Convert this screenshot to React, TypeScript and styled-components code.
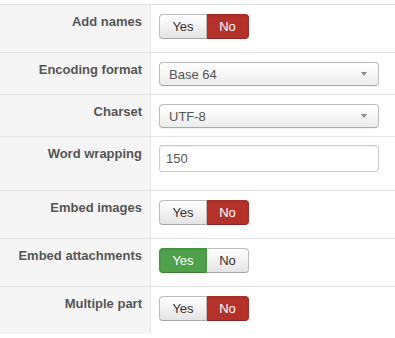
import styled, { createGlobalStyle } from "styled-components";

const GlobalStyle = createGlobalStyle`
  html, body {
    margin: 0;
    padding: 0;
    background: #ffffff;
    font-family: "Liberation Sans", Arial, sans-serif;
    font-size: 13px;
  }
`;

const Page = styled.div`
  padding-top: 4px;
  width: 395px;
  background: #ffffff;
`;

const Table = styled.div`
  border-top: 1px solid #dedede;
`;

const Row = styled.div<{ $last?: boolean }>`
  display: grid;
  grid-template-columns: 151px 1fr;
  border-bottom: ${(p) => (p.$last ? "none" : "1px solid #e3e3e3")};
`;

const Label = styled.div`
  box-sizing: border-box;
  background: #f5f5f5;
  border-right: 1px solid #e3e3e3;
  padding: 8px 8px 0 0;
  text-align: right;
  font-weight: bold;
  font-size: 13px;
  line-height: 18px;
  color: #555555;
`;

const Value = styled.div<{ $top: number; $bottom: number }>`
  padding: ${(p) => `${p.$top}px 8px ${p.$bottom}px 8px`};
  display: flex;
  align-items: flex-start;
`;

const Toggle = styled.div`
  display: inline-flex;
  height: 25px;
`;

const ToggleBtn = styled.span<{ $on?: "yes" | "no"; $side: "left" | "right"; $w: number }>`
  box-sizing: border-box;
  width: ${(p) => p.$w}px;
  height: 25px;
  display: flex;
  align-items: center;
  justify-content: center;
  font-size: 13px;
  color: ${(p) => (p.$on ? "#ffffff" : "#333333")};
  background: ${(p) =>
    p.$on === "no"
      ? "#b5322a"
      : p.$on === "yes"
      ? "#4fa14c"
      : "linear-gradient(#ffffff, #e4e4e4)"};
  border: 1px solid
    ${(p) => (p.$on === "no" ? "#a82d26" : p.$on === "yes" ? "#45923f" : "#bdbdbd")};
  border-bottom-color: ${(p) =>
    p.$on === "no" ? "#8f2520" : p.$on === "yes" ? "#3a7d35" : "#a6a6a6"};
  border-radius: ${(p) => (p.$side === "left" ? "4px 0 0 4px" : "0 4px 4px 0")};
  ${(p) => (p.$side === "right" ? "border-left: none;" : "")}
  box-shadow: ${(p) => (p.$on ? "inset 0 1px 2px rgba(0,0,0,0.12)" : "inset 0 1px 0 rgba(255,255,255,0.6)")};
`;

const Select = styled.div`
  box-sizing: border-box;
  width: 220px;
  height: 24px;
  display: flex;
  align-items: center;
  justify-content: space-between;
  padding: 0 11px 0 9px;
  border: 1px solid #bcbcbc;
  border-bottom-color: #a9a9a9;
  border-radius: 4px;
  background: linear-gradient(#ffffff, #ececec);
  box-shadow: 0 1px 1px rgba(0, 0, 0, 0.06);
  color: #555555;
  font-size: 13px;
`;

const Caret = styled.span`
  width: 0;
  height: 0;
  border-left: 3px solid transparent;
  border-right: 3px solid transparent;
  border-top: 4px solid #8a8a8a;
`;

const Input = styled.div`
  box-sizing: border-box;
  width: 220px;
  height: 27px;
  display: flex;
  align-items: center;
  padding-left: 6px;
  border: 1px solid #cccccc;
  border-radius: 3px;
  background: #ffffff;
  box-shadow: inset 0 1px 1px rgba(0, 0, 0, 0.07);
  color: #555555;
  font-size: 13px;
`;

type Choice = "yes" | "no";

function YesNo({ value }: { value: Choice }) {
  return (
    <Toggle>
      <ToggleBtn $side="left" $w={48} $on={value === "yes" ? "yes" : undefined}>
        Yes
      </ToggleBtn>
      <ToggleBtn $side="right" $w={42} $on={value === "no" ? "no" : undefined}>
        No
      </ToggleBtn>
    </Toggle>
  );
}

export default function App() {
  return (
    <>
      <GlobalStyle />
      <Page>
        <Table>
          <Row>
            <Label>Add names</Label>
            <Value $top={9} $bottom={13}>
              <YesNo value="no" />
            </Value>
          </Row>
          <Row>
            <Label>Encoding format</Label>
            <Value $top={9} $bottom={8}>
              <Select>
                Base 64
                <Caret />
              </Select>
            </Value>
          </Row>
          <Row>
            <Label>Charset</Label>
            <Value $top={9} $bottom={8}>
              <Select>
                UTF-8
                <Caret />
              </Select>
            </Value>
          </Row>
          <Row>
            <Label>Word wrapping</Label>
            <Value $top={8} $bottom={18}>
              <Input>150</Input>
            </Value>
          </Row>
          <Row>
            <Label>Embed images</Label>
            <Value $top={9} $bottom={13}>
              <YesNo value="no" />
            </Value>
          </Row>
          <Row>
            <Label>Embed attachments</Label>
            <Value $top={9} $bottom={13}>
              <YesNo value="yes" />
            </Value>
          </Row>
          <Row $last>
            <Label>Multiple part</Label>
            <Value $top={9} $bottom={13}>
              <YesNo value="no" />
            </Value>
          </Row>
        </Table>
      </Page>
    </>
  );
}
